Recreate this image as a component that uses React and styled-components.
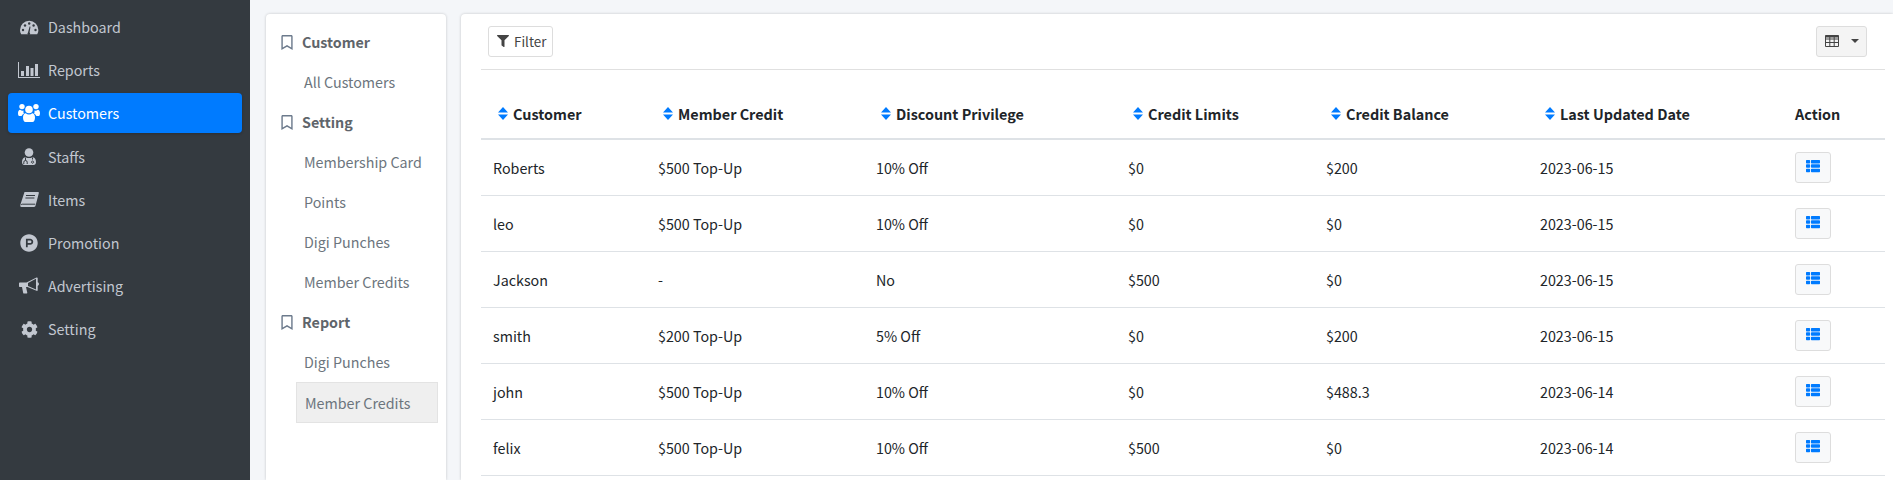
import React from 'react';
import styled, { createGlobalStyle } from 'styled-components';
import { FaProductHunt, FaCog, FaRegBookmark, FaFilter, FaThList } from 'react-icons/fa';

const GlobalStyle = createGlobalStyle`
  html, body {
    margin: 0;
    height: 100%;
    overflow: hidden;
    background: #f4f6f9;
    font-family: "Noto Sans CJK SC", "Noto Sans", sans-serif;
    font-size: 14.3px;
    line-height: 24px;
    color: #212529;
  }
  * { box-sizing: border-box; }
`;

const Page = styled.div`
  display: flex;
  height: 480px;
  overflow: hidden;
`;

const Sidebar = styled.aside`
  width: 250px;
  flex: none;
  background: #343a40;
  padding: 7px 8px 0;
  display: flex;
  flex-direction: column;
  gap: 3.2px;
`;

const NavItem = styled.div`
  display: flex;
  align-items: center;
  height: 40px;
  border-radius: 4px;
  padding-left: 10px;
  color: ${(p) => (p.$active ? '#fff' : '#c2c7d0')};
  background: ${(p) => (p.$active ? '#007bff' : 'transparent')};
  box-shadow: ${(p) => (p.$active ? '0 1px 3px rgba(0,0,0,.2)' : 'none')};
`;

const NavIcon = styled.span`
  width: 22px;
  height: 20px;
  margin-right: 8px;
  display: flex;
  align-items: center;
  justify-content: center;
  font-size: 18px;
  flex: none;
`;

const Content = styled.main`
  flex: 1;
  min-width: 0;
  display: flex;
  gap: 15px;
  padding: 14px 0 0 16px;
`;

const SubMenu = styled.nav`
  width: 180px;
  flex: none;
  background: #fff;
  border-radius: 4px 4px 0 0;
  box-shadow: 0 0 3px rgba(0, 0, 0, 0.2);
  padding: 8px 8px 0 15px;
`;

const SubHeading = styled.div`
  display: flex;
  align-items: center;
  height: 40px;
  font-weight: 700;
  color: #5f656b;
`;

const Bookmark = styled(FaRegBookmark)`
  width: 12px;
  height: 15px;
  margin-right: 9px;
  color: #6c7a8c;
`;

const SubLink = styled.div`
  display: flex;
  align-items: center;
  height: ${(p) => (p.$active ? '41px' : '40px')};
  margin: ${(p) => (p.$active ? '0 0 0 15px' : '0')};
  width: ${(p) => (p.$active ? '142px' : 'auto')};
  padding-left: ${(p) => (p.$active ? '8px' : '23px')};
  color: #6c757d;
  background: ${(p) => (p.$active ? '#efefef' : 'transparent')};
  border: ${(p) => (p.$active ? '1px solid #e3e3e3' : 'none')};
`;

const Card = styled.section`
  flex: 1;
  min-width: 0;
  background: #fff;
  border-radius: 4px 0 0 0;
  box-shadow: 0 0 3px rgba(0, 0, 0, 0.2);
  padding: 0 8px 0 20px;
`;

const Toolbar = styled.div`
  display: flex;
  justify-content: space-between;
  align-items: center;
  height: 56px;
  padding: 0 18px 0 7px;
  border-bottom: 1px solid #e0e0e0;
`;

const FilterButton = styled.button`
  display: flex;
  align-items: center;
  gap: 5px;
  width: 65px;
  height: 31px;
  padding: 0 0 2px 8px;
  background: #fff;
  border: 1px solid #ddd;
  border-radius: 3px;
  font: inherit;
  font-size: 13.4px;
  color: #444;
`;

const ColumnsButton = styled.button`
  display: flex;
  align-items: center;
  gap: 12px;
  width: 51px;
  height: 31px;
  padding: 0 0 2px 8px;
  background: #f4f4f4;
  border: 1px solid #ddd;
  border-radius: 3px;
  color: #444;
`;

const Caret = styled.span`
  width: 0;
  height: 0;
  border-left: 4px solid transparent;
  border-right: 4px solid transparent;
  border-top: 4px solid #444;
`;

const Table = styled.table`
  width: 100%;
  table-layout: fixed;
  border-collapse: collapse;
  margin-top: 17px;
`;

const Th = styled.th`
  height: 52px;
  padding: 2px 12px 0;
  text-align: left;
  font-weight: 700;
  font-size: 14.4px;
  white-space: nowrap;
  border-bottom: 2px solid #dee2e6;
`;

const SortLabel = styled.span`
  display: flex;
  align-items: center;
  gap: 5px;
  padding-left: 5px;
`;

const Td = styled.td`
  height: 56px;
  padding: ${(p) => (p.$action ? '0 12px' : '2px 12px 0')};
  border-bottom: 1px solid #dee2e6;
`;

const RowButton = styled.button`
  display: flex;
  align-items: center;
  justify-content: center;
  width: 36px;
  height: 31px;
  padding: 0 0 2px;
  background: #f8f9fa;
  border: 1px solid #ddd;
  border-radius: 3px;
  color: #007bff;
`;

const Icon = ({ children }) => (
  <svg width="22" height="20" viewBox="0 0 22 20" fill="currentColor">{children}</svg>
);

const GaugeIcon = () => (
  <Icon>
    <path d="M2 13a9.2 9.2 0 0 1 18.4 0c0 1.6-.4 3-1.2 4.2H3.2C2.4 16 2 14.6 2 13z" />
    <g fill="#343a40">
      <circle cx="5" cy="13" r="1.2" />
      <circle cx="7" cy="8.5" r="1.2" />
      <circle cx="11.2" cy="6.5" r="1.2" />
      <circle cx="15.6" cy="8.5" r="1.2" />
      <circle cx="17.5" cy="13" r="1.2" />
      <path d="M10 15.5l1.6-6 .9.2-.9 5.8a1.3 1.3 0 1 1-1.6 0z" />
    </g>
  </Icon>
);

const ChartIcon = () => (
  <Icon>
    <path d="M0 2h1v15h21v1H0z" />
    <path d="M3 11h3v5H3zM8 6h3v10H8zM12.500 8h3v8h-3zM17 4h3v12h-3z" />
  </Icon>
);

const UsersIcon = () => (
  <Icon>
    <circle cx="11" cy="6.500" r="3.800" />
    <circle cx="4" cy="3.600" r="2.700" />
    <circle cx="18" cy="3.600" r="2.700" />
    <path d="M0 10c0-2 1-3.300 2.200-3.300.9.900 2.200 1.300 3.500.8-.4 1-.3 2.300.3 3.200-1 .4-1.800 1.100-2.400 2.300H1.200C.5 13 0 12 0 10z" />
    <path d="M22 10c0-2-1-3.300-2.200-3.300-.9.900-2.200 1.300-3.500.8.4 1 .3 2.300-.3 3.200 1 .4 1.800 1.100 2.400 2.300h2.400c.7 0 1.200-1 1.200-3z" />
    <path d="M5 14.500c0-2.600 1.200-4.300 2.700-4.300 1.900 1.600 4.700 1.600 6.600 0 1.500 0 2.700 1.700 2.700 4.300 0 2.500-1 4.500-2.500 4.500h-7C6 19 5 17 5 14.500z" />
  </Icon>
);

const StaffIcon = () => (
  <Icon>
    <circle cx="11" cy="5.500" r="4.300" />
    <path d="M4 15c0-3 1.600-4.800 3.600-4.800 2 1.200 4.800 1.200 6.800 0 2 0 3.600 1.800 3.600 4.800 0 2-1 3-2.400 3H6.400C5 18 4 17 4 15z" />
    <path d="M7.500 10.500v3M14.500 10.500v2M5.800 17v-1.800a1.700 1.700 0 0 1 3.400 0V17M14.500 14a1.100 1.100 0 1 0 .1 0" fill="none" stroke="#343a40" strokeWidth="1" />
  </Icon>
);

const BookIcon = () => (
  <Icon>
    <path d="M6.500 2h13.500c.6 0 1 .5.800 1.200l-3.300 12.600c-.2.700-.6 1.200-1.400 1.200H3.500C2.600 17 2 16.300 2.200 15.300z" />
    <path d="M2.900 15.200c.1-.7.600-1 1.300-1h13" fill="none" stroke="#343a40" strokeWidth="1" />
    <path d="M8 5.500h9M7.400 8h9" fill="none" stroke="#343a40" strokeWidth="1.100" />
  </Icon>
);

const BullhornIcon = () => (
  <Icon>
    <path d="M2 6.500h6.500L18.500 1.500c.6-.3 1.200 0 1.200.6v4.200c.8.300 1.300 1 1.300 1.800s-.5 1.500-1.300 1.800v4.300c0 .6-.6.900-1.200.6L9.500 11H8l1.300 5.700c.1.500-.2.800-.6.800H6c-.4 0-.7-.2-.8-.6L4 11H2c-.6 0-1-.4-1-1V7.500c0-.6.400-1 1-1z" />
    <path d="M10 6.900l8-4.100v10.800l-8-3.700z" fill="#343a40" />
  </Icon>
);

const SortIcon = () => (
  <svg width="10" height="13" viewBox="0 0 10 13" fill="#007bff">
    <path d="M5 0l5 5.600H0zM0 7.400h10L5 13z" />
  </svg>
);

const TableIcon = () => (
  <svg width="14" height="12" viewBox="0 0 14 12" fill="none" stroke="currentColor" strokeWidth="1">
    <path d="M.500.500h13v11H.500zM.500 4h13M.500 7.500h13M4.800 1v10.500M9.200 1v10.500" />
    <path d="M.500 1.500h13" strokeWidth="2" />
  </svg>
);

const nav = [
  ['Dashboard', <GaugeIcon />],
  ['Reports', <ChartIcon />],
  ['Customers', <UsersIcon />, true],
  ['Staffs', <StaffIcon />],
  ['Items', <BookIcon />],
  ['Promotion', <FaProductHunt size={18} />],
  ['Advertising', <BullhornIcon />],
  ['Setting', <FaCog size={17} />],
];

const menu = [
  ['Customer', ['All Customers']],
  ['Setting', ['Membership Card', 'Points', 'Digi Punches', 'Member Credits']],
  ['Report', ['Digi Punches', 'Member Credits']],
];

const columns = [
  ['Customer', 165],
  ['Member Credit', 218],
  ['Discount Privilege', 252],
  ['Credit Limits', 198],
  ['Credit Balance', 214],
  ['Last Updated Date', 255],
];

const rows = [
  ['Roberts', '$500 Top-Up', '10% Off', '$0', '$200', '2023-06-15'],
  ['leo', '$500 Top-Up', '10% Off', '$0', '$0', '2023-06-15'],
  ['Jackson', '-', 'No', '$500', '$0', '2023-06-15'],
  ['smith', '$200 Top-Up', '5% Off', '$0', '$200', '2023-06-15'],
  ['john', '$500 Top-Up', '10% Off', '$0', '$488.3', '2023-06-14'],
  ['felix', '$500 Top-Up', '10% Off', '$500', '$0', '2023-06-14'],
];

const App = () => {
  return (
    <Page>
      <GlobalStyle />
      <Sidebar>
        {nav.map(([label, icon, active]) => (
          <NavItem key={label} $active={active}>
            <NavIcon>{icon}</NavIcon>
            {label}
          </NavItem>
        ))}
      </Sidebar>
      <Content>
        <SubMenu>
          {menu.map(([title, links], i) => (
            <div key={title}>
              <SubHeading><Bookmark />{title}</SubHeading>
              {links.map((link, j) => (
                <SubLink key={link} $active={i === 2 && j === 1}>{link}</SubLink>
              ))}
            </div>
          ))}
        </SubMenu>
        <Card>
          <Toolbar>
            <FilterButton><FaFilter size={12} />Filter</FilterButton>
            <ColumnsButton><TableIcon /><Caret /></ColumnsButton>
          </Toolbar>
          <Table>
            <colgroup>
              {columns.map(([name, width]) => <col key={name} width={width} />)}
              <col width={102} />
            </colgroup>
            <thead>
              <tr>
                {columns.map(([name]) => (
                  <Th key={name}><SortLabel><SortIcon />{name}</SortLabel></Th>
                ))}
                <Th>Action</Th>
              </tr>
            </thead>
            <tbody>
              {rows.map((row) => (
                <tr key={row[0]}>
                  {row.map((cell, i) => <Td key={i}>{cell}</Td>)}
                  <Td $action><RowButton><FaThList size={14} /></RowButton></Td>
                </tr>
              ))}
            </tbody>
          </Table>
        </Card>
      </Content>
    </Page>
  );
};

export default App;
